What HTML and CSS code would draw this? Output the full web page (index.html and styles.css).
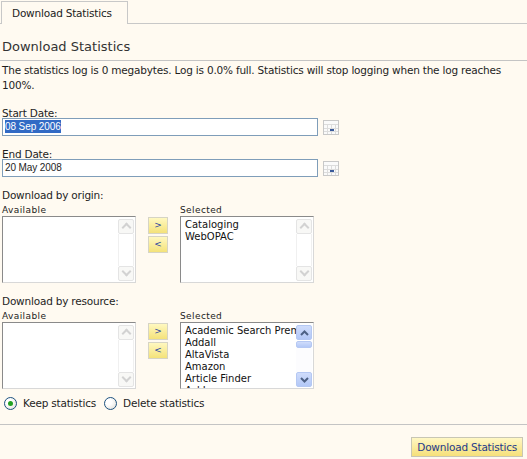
FILE: index.html
```html
<!DOCTYPE html>
<html>
<head>
<meta charset="utf-8">
<title>Download Statistics</title>
<link rel="stylesheet" href="styles.css">
</head>
<body>
<div class="tabbar"><div class="tab">Download Statistics</div></div>
<h1 class="title">Download Statistics</h1>
<p class="intro">The statistics log is 0 megabytes. Log is 0.0% full. Statistics will stop logging when the log reaches 100%.</p>

<div class="field field-start">
  <div class="label">Start Date:</div>
  <div class="date-row">
    <div class="date-input"><span class="sel">08 Sep 2006</span></div>
    <svg class="cal" width="16" height="15" viewBox="0 0 16 15"><rect x="0.5" y="0.5" width="15" height="14" fill="#fafafa" stroke="#c8c8c8"/><path d="M1 4.5H15M1 8.5H15M1 11.5H15M4.5 4V14M8.5 4V14M12.5 4V14" stroke="#dcdcdc" fill="none"/><rect x="7" y="9" width="4" height="2" fill="#3a5a9a"/></svg>
  </div>
</div>

<div class="field field-end">
  <div class="label">End Date:</div>
  <div class="date-row">
    <div class="date-input"><span>20 May 2008</span></div>
    <svg class="cal" width="16" height="15" viewBox="0 0 16 15"><rect x="0.5" y="0.5" width="15" height="14" fill="#fafafa" stroke="#c8c8c8"/><path d="M1 4.5H15M1 8.5H15M1 11.5H15M4.5 4V14M8.5 4V14M12.5 4V14" stroke="#dcdcdc" fill="none"/><rect x="7" y="9" width="4" height="2" fill="#3a5a9a"/></svg>
  </div>
</div>

<div class="group group-origin">
  <div class="label">Download by origin:</div>
  <div class="picker">
    <div class="col">
      <div class="small">Available</div>
      <div class="list">
        <div class="items"></div>
        <div class="sb off"><span class="btn up"></span><span class="track"></span><span class="btn down"></span></div>
      </div>
    </div>
    <div class="moves"><span class="mv">&gt;</span><span class="mv">&lt;</span></div>
    <div class="col">
      <div class="small">Selected</div>
      <div class="list">
        <div class="items"><div>Cataloging</div><div>WebOPAC</div></div>
        <div class="sb off"><span class="btn up"></span><span class="track"></span><span class="btn down"></span></div>
      </div>
    </div>
  </div>
</div>

<div class="group group-resource">
  <div class="label">Download by resource:</div>
  <div class="picker">
    <div class="col">
      <div class="small">Available</div>
      <div class="list">
        <div class="items"></div>
        <div class="sb off"><span class="btn up"></span><span class="track"></span><span class="btn down"></span></div>
      </div>
    </div>
    <div class="moves"><span class="mv">&gt;</span><span class="mv">&lt;</span></div>
    <div class="col">
      <div class="small">Selected</div>
      <div class="list">
        <div class="items"><div>Academic Search Premier</div><div>Addall</div><div>AltaVista</div><div>Amazon</div><div>Article Finder</div><div>AskJeeves</div></div>
        <div class="sb on"><span class="btn up"><svg width="9" height="6" viewBox="0 0 9 6"><path d="M1 5L4.5 1.5L8 5" stroke="#4d6185" stroke-width="2" fill="none"/></svg></span><span class="thumb"></span><span class="track"></span><span class="btn down"><svg width="9" height="6" viewBox="0 0 9 6"><path d="M1 1L4.5 4.5L8 1" stroke="#4d6185" stroke-width="2" fill="none"/></svg></span></div>
      </div>
    </div>
  </div>
</div>

<div class="radios">
  <span class="radio checked"></span><span class="rlabel">Keep statistics</span>
  <span class="radio"></span><span class="rlabel">Delete statistics</span>
</div>

<div class="footer"><span class="go">Download Statistics</span></div>
</body>
</html>
```

FILE: styles.css
```css
html, body {
  margin: 0;
  padding: 0;
  background: #fffaf1;
}
body {
  font-family: "DejaVu Sans", Verdana, sans-serif;
  font-size: 10.5px;
  letter-spacing: -0.2px;
  color: #1e1e1e;
  width: 527px;
  height: 459px;
  overflow: hidden;
}
.tabbar {
  display: flex;
  padding: 1px 0 0 1px;
  border-bottom: 1px solid #c8c8c8;
}
.tab {
  border: 1px solid #c8c8c8;
  border-bottom: none;
  height: 22px;
  line-height: 23px;
  padding: 0 15px 0 10px;
  margin-bottom: -1px;
  background: #fffaf1;
  color: #222;
}
.title {
  margin: 13px 0 0;
  padding: 0 2px 5px;
  font-size: 13px;
  letter-spacing: 0;
  font-weight: normal;
  line-height: 20px;
  height: 18px;
  color: #333;
  border-bottom: 1px solid #c4c4c4;
}
.intro {
  margin: 2px 0 0;
  padding: 0 2px;
  line-height: 15px;
}
.field { padding: 0 2px; }
.field-start { margin-top: 13px; }
.field-end { margin-top: 11px; }
.label { line-height: 15px; height: 12px; }
.date-row { display: flex; align-items: center; }
.date-input {
  width: 312px;
  height: 16px;
  border: 1px solid #7f9db9;
  background: #fff;
  font-family: "Liberation Sans", Arial, sans-serif;
  font-size: 10px;
  letter-spacing: -0.1px;
  line-height: 16px;
  padding-left: 2px;
  box-sizing: content-box;
}
.sel { background: #316ac5; color: #fff; padding: 1px 0; }
.cal { margin-left: 5px; }
.group { padding: 0 2px; }
.group .label { line-height: 17px; height: 14px; }
.group-origin { margin-top: 10px; }
.group-resource { margin-top: 10px; }
.picker { display: flex; align-items: flex-start; margin-top: 3px; }
.small { font-size: 9px; line-height: 13px; height: 11px; color: #222; letter-spacing: 0.4px; }
.col { display: flex; flex-direction: column; }
.list {
  display: flex;
  width: 132px;
  height: 65px;
  margin-top: 1px;
  border: 1px solid #8a8a8a;
  border-right-color: #d8d8d8;
  border-bottom-color: #d8d8d8;
  background: #fff;
  overflow: hidden;
}
.items {
  flex: 1;
  min-width: 0;
  padding: 2px 0 0 4px;
  font-size: 10px;
  letter-spacing: 0;
  line-height: 12px;
  white-space: nowrap;
  overflow: hidden;
  color: #111;
}
.sb {
  width: 16px;
  display: flex;
  flex-direction: column;
  flex: none;
  padding: 2px 1px 1px 0;
}
.sb .btn {
  height: 15px;
  box-sizing: border-box;
  display: flex;
  align-items: center;
  justify-content: center;
  border-radius: 2px;
  flex: none;
}
.sb .track { flex: 1; }
.sb.off .btn { border: 1px solid #e4e4e4; background: #f8f8f6; }
.sb.off .btn.up::after, .sb.off .btn.down::after {
  content: "";
  width: 5px; height: 5px;
  border-left: 2px solid #d2d2d2;
  border-top: 2px solid #d2d2d2;
  transform: translateY(1px) rotate(45deg);
}
.sb.off .btn.down::after { transform: translateY(-2px) rotate(225deg); }
.sb.off .track { border-left: 1px solid #f0f0f0; border-right: 1px solid #f0f0f0; }
.sb.on .btn, .sb.on .thumb {
  border: 1px solid #b5c8f3;
  background: linear-gradient(#cfdcfb, #b3c8f7);
}
.sb.on .thumb { height: 7px; margin-top: 1px; border-radius: 2px; box-sizing: border-box; }
.sb.on .track { background: #fcfcfe; }
.moves {
  display: flex;
  flex-direction: column;
  gap: 2px;
  margin: 13px 12px 0 12px;
}
.mv {
  width: 20px;
  height: 17px;
  box-sizing: border-box;
  border: 1px solid #d6d4c4;
  background: linear-gradient(#fff8c0, #f4e27a);
  color: #2a44a0;
  font-size: 9px;
  letter-spacing: 0;
  line-height: 15px;
  text-align: center;
}
.radios {
  display: flex;
  align-items: center;
  height: 16px;
  margin-top: 6px;
  padding-left: 4px;
}
.radio {
  width: 13px; height: 13px;
  box-sizing: border-box;
  border: 1px solid #1c5180;
  border-radius: 50%;
  background: radial-gradient(circle at 35% 35%, #ffffff 30%, #dcdad2);
  display: flex;
  align-items: center;
  justify-content: center;
}
.radio.checked::after {
  content: "";
  width: 5px; height: 5px;
  border-radius: 50%;
  background: #21a121;
}
.rlabel { margin: 0 8px 0 6px; }
.footer {
  margin-top: 13px;
  border-top: 1px solid #c4c4c4;
  display: flex;
  justify-content: flex-end;
  padding: 12px 4px 0 0;
}
.go {
  height: 18px;
  line-height: 19px;
  padding: 0 5px;
  border: 1px solid #c8c6b4;
  background: linear-gradient(#fff7c4, #f6e07a);
  color: #243a8c;
}
```
